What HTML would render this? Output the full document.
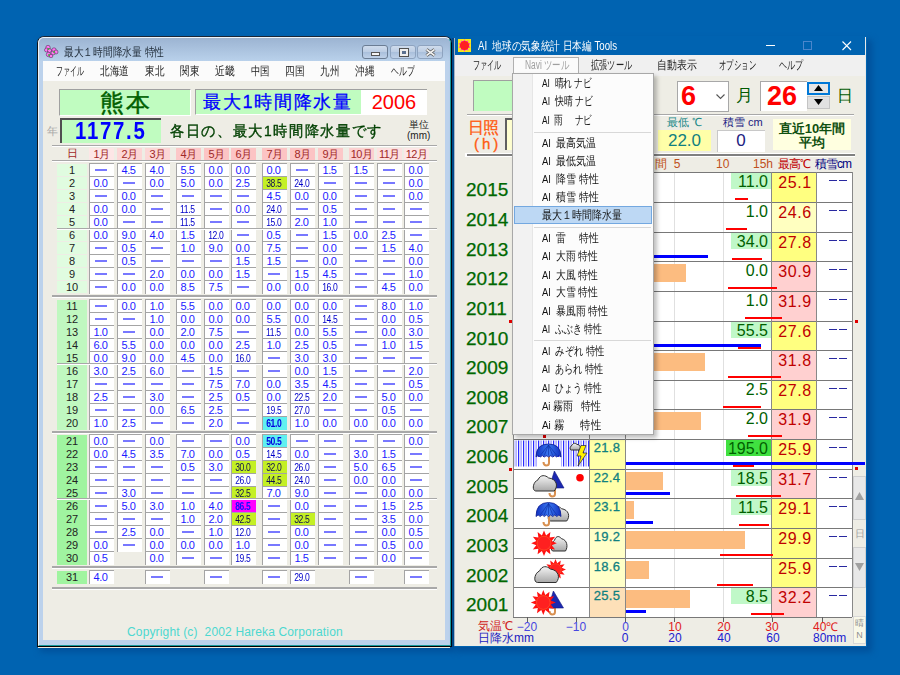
<!DOCTYPE html><html><head><meta charset="utf-8"><style>
*{box-sizing:border-box}
body{margin:0;width:900px;height:675px;overflow:hidden;background:#0063b1;font-family:"Liberation Sans",sans-serif;position:relative}
.a{position:absolute}
.t{position:absolute;white-space:nowrap}
.c{position:absolute;width:25px;height:14px;border-top:1px solid #a4a4a4;border-left:1px solid #a4a4a4;background:#fff;color:#1c1cff;font-size:11px;line-height:13.5px;text-align:center;letter-spacing:-.4px;padding-right:3px}
.c i{position:absolute;left:5px;top:5px;width:12px;height:2px;background:#7878ff}
.c b{font-weight:normal;display:inline-block;transform:scaleX(.78);font-size:11px;letter-spacing:-.5px;color:#0000c8}
.lbl{position:absolute;left:57px;width:30px;height:12px;font-size:11px;line-height:13px;text-align:center;color:#222}
.sep{position:absolute;left:52px;width:385px;height:1px;background:#a8a8a8;border-bottom:1px solid #fff;box-sizing:content-box}
.mi{position:absolute;font-size:12px;color:#222;top:63px;line-height:16px}
.dd{position:absolute;left:541px;font-size:11.5px;color:#111;line-height:14px}
</style></head><body>
<div class="a" style="left:40px;top:40px;width:416px;height:612px;background:#00509a;filter:blur(3px)"></div>
<div class="a" style="left:37px;top:36px;width:415px;height:611px;background:#bcd2ec;border:1px solid #000;border-top-color:#1a2636;border-left-color:#101418;border-radius:7px 7px 0 0"></div>
<div class="a" style="left:38px;top:37px;width:413px;height:609px;border-top:1px solid #eef4fa;border-left:1px solid #eef4fa;border-right:1px solid #1a9a9a;border-bottom:1px solid #1a9a9a;border-radius:6px 6px 0 0"></div>
<div class="a" style="left:38px;top:647px;width:412px;height:1px;background:#f0ece0"></div>
<div class="a" style="left:39px;top:38px;width:411px;height:23px;background:linear-gradient(#9cb4d2,#b9d1eb);border-radius:5px 5px 0 0"></div>
<div class="a" style="left:43px;top:61px;width:402px;height:20px;background:#fbfbfb"></div>
<div class="a" style="left:43px;top:81px;width:402px;height:559px;background:#eeede5"></div>
<svg class="a" style="left:44px;top:44px" width="15" height="14" viewBox="0 0 15 14"><g fill="#ff78f0" stroke="#3a2040" stroke-width=".5"><circle cx="4" cy="3.5" r="2.2"/><circle cx="2.5" cy="6" r="2"/><circle cx="5.5" cy="6.5" r="2"/><circle cx="10" cy="6" r="2.2"/><circle cx="12" cy="8" r="2"/><circle cx="9" cy="9" r="2"/><circle cx="4.5" cy="10.5" r="2.2"/><circle cx="7" cy="12" r="1.8"/></g><circle cx="4.5" cy="5" r="1" fill="#40b040"/><circle cx="10" cy="8" r="1" fill="#40b040"/><circle cx="5" cy="11" r="1" fill="#40b040"/></svg>
<div class="t" style="left:64px;top:45px;font-size:12px;line-height:14px;color:#1e2a36;"><span id="f1" style="display:inline-block;transform:scaleX(0.8107);transform-origin:0 0">最大１時間降水量 特性</span></div>
<div class="a" style="left:362px;top:45px;width:26px;height:14px;border:1px solid #6b7d94;border-radius:3px;background:linear-gradient(#cfdcec 0%,#bccde3 50%,#a9bfdb 51%,#bfd1e8 100%)"><div class="a" style="left:8px;top:6px;width:9px;height:4px;background:#f4f4f4;border:1px solid #555"></div></div>
<div class="a" style="left:390px;top:45px;width:26px;height:14px;border:1px solid #8ea3bf;border-radius:3px;background:linear-gradient(#cfdcec 0%,#bccde3 50%,#a9bfdb 51%,#bfd1e8 100%)"><div class="a" style="left:9px;top:3px;width:8px;height:7px;background:#5a7090;border:2px solid #eeeeee;outline:1px solid #505050"></div></div>
<div class="a" style="left:417px;top:45px;width:26px;height:14px;border:1px solid #8ea3bf;border-radius:3px;background:linear-gradient(#cfdcec 0%,#bccde3 50%,#a9bfdb 51%,#bfd1e8 100%)"><svg class="a" style="left:7px;top:2px" width="11" height="9"><path d="M1.5 1.5L9.5 7.5M9.5 1.5L1.5 7.5" stroke="#555" stroke-width="3.2"/><path d="M1.5 1.5L9.5 7.5M9.5 1.5L1.5 7.5" stroke="#f0f0f0" stroke-width="1.6"/></svg></div>
<div class="t" style="left:55.7px;top:63px;font-size:12px;line-height:16px;color:#222;"><span id="f2" style="display:inline-block;transform:scaleX(0.5833);transform-origin:0 0">ファイル</span></div>
<div class="t" style="left:100px;top:63px;font-size:12px;line-height:16px;color:#222;"><span id="f3" style="display:inline-block;transform:scaleX(0.8056);transform-origin:0 0">北海道</span></div>
<div class="t" style="left:144.8px;top:63px;font-size:12px;line-height:16px;color:#222;"><span id="f4" style="display:inline-block;transform:scaleX(0.8000);transform-origin:0 0">東北</span></div>
<div class="t" style="left:179.8px;top:63px;font-size:12px;line-height:16px;color:#222;"><span id="f5" style="display:inline-block;transform:scaleX(0.8000);transform-origin:0 0">関東</span></div>
<div class="t" style="left:214.8px;top:63px;font-size:12px;line-height:16px;color:#222;"><span id="f6" style="display:inline-block;transform:scaleX(0.8333);transform-origin:0 0">近畿</span></div>
<div class="t" style="left:250.6px;top:63px;font-size:12px;line-height:16px;color:#222;"><span id="f7" style="display:inline-block;transform:scaleX(0.7833);transform-origin:0 0">中国</span></div>
<div class="t" style="left:284.8px;top:63px;font-size:12px;line-height:16px;color:#222;"><span id="f8" style="display:inline-block;transform:scaleX(0.8000);transform-origin:0 0">四国</span></div>
<div class="t" style="left:320px;top:63px;font-size:12px;line-height:16px;color:#222;"><span id="f9" style="display:inline-block;transform:scaleX(0.7917);transform-origin:0 0">九州</span></div>
<div class="t" style="left:355.4px;top:63px;font-size:12px;line-height:16px;color:#222;"><span id="f10" style="display:inline-block;transform:scaleX(0.8042);transform-origin:0 0">沖縄</span></div>
<div class="t" style="left:390.8px;top:63px;font-size:12px;line-height:16px;color:#222;"><span id="f11" style="display:inline-block;transform:scaleX(0.6528);transform-origin:0 0">ヘルプ</span></div>
<div class="a" style="left:59px;top:89px;width:132px;height:27px;background:#c0fcc0;border-top:1px solid #a0a0a0;border-left:1px solid #a0a0a0;border-right:1px solid #fff;border-bottom:1px solid #fff"></div>
<div class="t" style="left:59px;top:89px;width:132px;text-align:center;font-size:24px;line-height:28px;letter-spacing:2px;text-indent:2px;color:#006000;-webkit-text-stroke:.5px #006000">熊本</div>
<div class="a" style="left:195px;top:89px;width:166px;height:26px;background:#c0fcc0;border-top:1px solid #a0a0a0;border-left:1px solid #a0a0a0;border-bottom:1px solid #fff"></div>
<div class="t" style="left:203px;top:89px;font-size:18px;line-height:27px;letter-spacing:1.7px;color:#0000ff;-webkit-text-stroke:.3px #0000ff">最大1時間降水量</div>
<div class="a" style="left:361px;top:89px;width:66px;height:26px;background:#fff;border-top:1px solid #a0a0a0"></div>
<div class="t" style="left:361px;top:89px;width:66px;text-align:center;font-size:20px;line-height:27px;color:#ff0000">2006</div>
<div class="t" style="left:47px;top:124px;font-size:11px;line-height:14px;color:#a8a8a8">年</div>
<div class="a" style="left:60px;top:118px;width:101px;height:25px;background:#c0fcc0;border-top:2px solid #505050;border-left:2px solid #505050"></div>
<div class="t" style="left:75px;top:118px;font-size:24px;font-weight:bold;line-height:26px;color:#0000ff;letter-spacing:2px;transform:scaleX(.85);transform-origin:0 0">1177.5</div>
<div class="t" style="left:170px;top:123px;font-size:14.5px;line-height:17px;color:#004000;-webkit-text-stroke:.35px #004000;letter-spacing:1.5px"><span id="f12" style="display:inline-block;transform:scaleX(0.9506);transform-origin:0 0">各日の、最大1時間降水量です</span></div>
<div class="t" style="left:407px;top:119px;font-size:10px;line-height:11px;color:#222;text-align:center;width:23px">単位<br>(mm)</div>
<div class="sep" style="top:145px"></div>
<div class="sep" style="top:160px"></div>
<div class="t" style="left:57px;top:147px;width:30px;text-align:center;font-size:11px;line-height:13px;color:#a02828">日</div>
<div class="t" style="left:89px;top:148px;width:25px;height:12px;background:#fde6e6;text-align:center;font-size:11px;line-height:13px;color:#a02828;letter-spacing:-.5px">1月</div>
<div class="t" style="left:117px;top:148px;width:25px;height:12px;background:#fcd6d6;text-align:center;font-size:11px;line-height:13px;color:#a02828;letter-spacing:-.5px">2月</div>
<div class="t" style="left:145px;top:148px;width:25px;height:12px;background:#fcd6d6;text-align:center;font-size:11px;line-height:13px;color:#a02828;letter-spacing:-.5px">3月</div>
<div class="t" style="left:176px;top:148px;width:25px;height:12px;background:#fcc8c8;text-align:center;font-size:11px;line-height:13px;color:#a02828;letter-spacing:-.5px">4月</div>
<div class="t" style="left:204px;top:148px;width:25px;height:12px;background:#fcc4c4;text-align:center;font-size:11px;line-height:13px;color:#a02828;letter-spacing:-.5px">5月</div>
<div class="t" style="left:231px;top:148px;width:25px;height:12px;background:#fcc4c4;text-align:center;font-size:11px;line-height:13px;color:#a02828;letter-spacing:-.5px">6月</div>
<div class="t" style="left:262px;top:148px;width:25px;height:12px;background:#fcc4c4;text-align:center;font-size:11px;line-height:13px;color:#a02828;letter-spacing:-.5px">7月</div>
<div class="t" style="left:290px;top:148px;width:25px;height:12px;background:#fcc4c4;text-align:center;font-size:11px;line-height:13px;color:#a02828;letter-spacing:-.5px">8月</div>
<div class="t" style="left:318px;top:148px;width:25px;height:12px;background:#fcc8c8;text-align:center;font-size:11px;line-height:13px;color:#a02828;letter-spacing:-.5px">9月</div>
<div class="t" style="left:349px;top:148px;width:25px;height:12px;background:#fcd0d0;text-align:center;font-size:11px;line-height:13px;color:#a02828;letter-spacing:-.5px">10月</div>
<div class="t" style="left:377px;top:148px;width:25px;height:12px;background:#fde0e0;text-align:center;font-size:11px;line-height:13px;color:#a02828;letter-spacing:-.5px">11月</div>
<div class="t" style="left:404px;top:148px;width:25px;height:12px;background:#fde6e6;text-align:center;font-size:11px;line-height:13px;color:#a02828;letter-spacing:-.5px">12月</div>
<div class="lbl" style="top:164px;height:12px;background:#e0fce0">1</div>
<div class="c" style="left:89px;top:163px"><i></i></div>
<div class="c" style="left:117px;top:163px">4.5</div>
<div class="c" style="left:145px;top:163px">4.0</div>
<div class="c" style="left:176px;top:163px">5.5</div>
<div class="c" style="left:204px;top:163px">0.0</div>
<div class="c" style="left:231px;top:163px">0.0</div>
<div class="c" style="left:262px;top:163px">0.0</div>
<div class="c" style="left:290px;top:163px"><i></i></div>
<div class="c" style="left:318px;top:163px">1.5</div>
<div class="c" style="left:349px;top:163px">1.5</div>
<div class="c" style="left:377px;top:163px"><i></i></div>
<div class="c" style="left:404px;top:163px">0.0</div>
<div class="lbl" style="top:177px;height:12px;background:#e0fce0">2</div>
<div class="c" style="left:89px;top:176px">0.0</div>
<div class="c" style="left:117px;top:176px"><i></i></div>
<div class="c" style="left:145px;top:176px">0.0</div>
<div class="c" style="left:176px;top:176px">5.0</div>
<div class="c" style="left:204px;top:176px">0.0</div>
<div class="c" style="left:231px;top:176px">2.5</div>
<div class="c" style="left:262px;top:176px;background:#c4f024"><b style="color:#101050">38.5</b></div>
<div class="c" style="left:290px;top:176px"><b style="">24.0</b></div>
<div class="c" style="left:318px;top:176px"><i></i></div>
<div class="c" style="left:349px;top:176px"><i></i></div>
<div class="c" style="left:377px;top:176px"><i></i></div>
<div class="c" style="left:404px;top:176px">0.0</div>
<div class="lbl" style="top:190px;height:12px;background:#e0fce0">3</div>
<div class="c" style="left:89px;top:189px"><i></i></div>
<div class="c" style="left:117px;top:189px">0.0</div>
<div class="c" style="left:145px;top:189px"><i></i></div>
<div class="c" style="left:176px;top:189px"><i></i></div>
<div class="c" style="left:204px;top:189px"><i></i></div>
<div class="c" style="left:231px;top:189px"><i></i></div>
<div class="c" style="left:262px;top:189px">4.5</div>
<div class="c" style="left:290px;top:189px">0.0</div>
<div class="c" style="left:318px;top:189px">0.0</div>
<div class="c" style="left:349px;top:189px"><i></i></div>
<div class="c" style="left:377px;top:189px"><i></i></div>
<div class="c" style="left:404px;top:189px">0.0</div>
<div class="lbl" style="top:203px;height:12px;background:#e0fce0">4</div>
<div class="c" style="left:89px;top:202px">0.0</div>
<div class="c" style="left:117px;top:202px">0.0</div>
<div class="c" style="left:145px;top:202px"><i></i></div>
<div class="c" style="left:176px;top:202px"><b style="">11.5</b></div>
<div class="c" style="left:204px;top:202px"><i></i></div>
<div class="c" style="left:231px;top:202px">0.0</div>
<div class="c" style="left:262px;top:202px"><b style="">24.0</b></div>
<div class="c" style="left:290px;top:202px"><i></i></div>
<div class="c" style="left:318px;top:202px">0.5</div>
<div class="c" style="left:349px;top:202px"><i></i></div>
<div class="c" style="left:377px;top:202px"><i></i></div>
<div class="c" style="left:404px;top:202px"><i></i></div>
<div class="lbl" style="top:216px;height:12px;background:#e0fce0">5</div>
<div class="c" style="left:89px;top:215px">0.0</div>
<div class="c" style="left:117px;top:215px"><i></i></div>
<div class="c" style="left:145px;top:215px"><i></i></div>
<div class="c" style="left:176px;top:215px"><b style="">11.5</b></div>
<div class="c" style="left:204px;top:215px"><i></i></div>
<div class="c" style="left:231px;top:215px"><i></i></div>
<div class="c" style="left:262px;top:215px"><b style="">15.0</b></div>
<div class="c" style="left:290px;top:215px">2.0</div>
<div class="c" style="left:318px;top:215px">1.0</div>
<div class="c" style="left:349px;top:215px"><i></i></div>
<div class="c" style="left:377px;top:215px"><i></i></div>
<div class="c" style="left:404px;top:215px"><i></i></div>
<div class="lbl" style="top:229px;height:12px;background:#e0fce0">6</div>
<div class="c" style="left:89px;top:228px">0.0</div>
<div class="c" style="left:117px;top:228px">9.0</div>
<div class="c" style="left:145px;top:228px">4.0</div>
<div class="c" style="left:176px;top:228px">1.5</div>
<div class="c" style="left:204px;top:228px"><b style="">12.0</b></div>
<div class="c" style="left:231px;top:228px"><i></i></div>
<div class="c" style="left:262px;top:228px">0.5</div>
<div class="c" style="left:290px;top:228px"><i></i></div>
<div class="c" style="left:318px;top:228px">1.5</div>
<div class="c" style="left:349px;top:228px">0.0</div>
<div class="c" style="left:377px;top:228px">2.5</div>
<div class="c" style="left:404px;top:228px"><i></i></div>
<div class="lbl" style="top:242px;height:12px;background:#e0fce0">7</div>
<div class="c" style="left:89px;top:241px"><i></i></div>
<div class="c" style="left:117px;top:241px">0.5</div>
<div class="c" style="left:145px;top:241px"><i></i></div>
<div class="c" style="left:176px;top:241px">1.0</div>
<div class="c" style="left:204px;top:241px">9.0</div>
<div class="c" style="left:231px;top:241px">0.0</div>
<div class="c" style="left:262px;top:241px">7.5</div>
<div class="c" style="left:290px;top:241px"><i></i></div>
<div class="c" style="left:318px;top:241px">0.0</div>
<div class="c" style="left:349px;top:241px"><i></i></div>
<div class="c" style="left:377px;top:241px">1.5</div>
<div class="c" style="left:404px;top:241px">4.0</div>
<div class="lbl" style="top:255px;height:12px;background:#e0fce0">8</div>
<div class="c" style="left:89px;top:254px"><i></i></div>
<div class="c" style="left:117px;top:254px">0.5</div>
<div class="c" style="left:145px;top:254px"><i></i></div>
<div class="c" style="left:176px;top:254px"><i></i></div>
<div class="c" style="left:204px;top:254px"><i></i></div>
<div class="c" style="left:231px;top:254px">1.5</div>
<div class="c" style="left:262px;top:254px">1.5</div>
<div class="c" style="left:290px;top:254px"><i></i></div>
<div class="c" style="left:318px;top:254px">0.0</div>
<div class="c" style="left:349px;top:254px"><i></i></div>
<div class="c" style="left:377px;top:254px"><i></i></div>
<div class="c" style="left:404px;top:254px">0.0</div>
<div class="lbl" style="top:268px;height:12px;background:#e0fce0">9</div>
<div class="c" style="left:89px;top:267px"><i></i></div>
<div class="c" style="left:117px;top:267px"><i></i></div>
<div class="c" style="left:145px;top:267px">2.0</div>
<div class="c" style="left:176px;top:267px">0.0</div>
<div class="c" style="left:204px;top:267px">0.0</div>
<div class="c" style="left:231px;top:267px">1.5</div>
<div class="c" style="left:262px;top:267px"><i></i></div>
<div class="c" style="left:290px;top:267px">1.5</div>
<div class="c" style="left:318px;top:267px">4.5</div>
<div class="c" style="left:349px;top:267px"><i></i></div>
<div class="c" style="left:377px;top:267px"><i></i></div>
<div class="c" style="left:404px;top:267px">1.0</div>
<div class="lbl" style="top:281px;height:12px;background:#e0fce0">10</div>
<div class="c" style="left:89px;top:280px"><i></i></div>
<div class="c" style="left:117px;top:280px">0.0</div>
<div class="c" style="left:145px;top:280px">0.0</div>
<div class="c" style="left:176px;top:280px">8.5</div>
<div class="c" style="left:204px;top:280px">7.5</div>
<div class="c" style="left:231px;top:280px"><i></i></div>
<div class="c" style="left:262px;top:280px">0.0</div>
<div class="c" style="left:290px;top:280px">0.0</div>
<div class="c" style="left:318px;top:280px"><b style="">16.0</b></div>
<div class="c" style="left:349px;top:280px"><i></i></div>
<div class="c" style="left:377px;top:280px">4.5</div>
<div class="c" style="left:404px;top:280px">0.0</div>
<div class="lbl" style="top:300px;height:13px;background:#c0f8c0">11</div>
<div class="c" style="left:89px;top:299px"><i></i></div>
<div class="c" style="left:117px;top:299px">0.0</div>
<div class="c" style="left:145px;top:299px">1.0</div>
<div class="c" style="left:176px;top:299px">5.5</div>
<div class="c" style="left:204px;top:299px">0.0</div>
<div class="c" style="left:231px;top:299px">0.0</div>
<div class="c" style="left:262px;top:299px">0.0</div>
<div class="c" style="left:290px;top:299px">0.0</div>
<div class="c" style="left:318px;top:299px">0.0</div>
<div class="c" style="left:349px;top:299px"><i></i></div>
<div class="c" style="left:377px;top:299px">8.0</div>
<div class="c" style="left:404px;top:299px">1.0</div>
<div class="lbl" style="top:313px;height:13px;background:#c0f8c0">12</div>
<div class="c" style="left:89px;top:312px"><i></i></div>
<div class="c" style="left:117px;top:312px"><i></i></div>
<div class="c" style="left:145px;top:312px">1.0</div>
<div class="c" style="left:176px;top:312px">0.0</div>
<div class="c" style="left:204px;top:312px">0.0</div>
<div class="c" style="left:231px;top:312px">0.0</div>
<div class="c" style="left:262px;top:312px">5.5</div>
<div class="c" style="left:290px;top:312px">0.0</div>
<div class="c" style="left:318px;top:312px"><b style="">14.5</b></div>
<div class="c" style="left:349px;top:312px"><i></i></div>
<div class="c" style="left:377px;top:312px">0.0</div>
<div class="c" style="left:404px;top:312px">0.5</div>
<div class="lbl" style="top:326px;height:13px;background:#c0f8c0">13</div>
<div class="c" style="left:89px;top:325px">1.0</div>
<div class="c" style="left:117px;top:325px"><i></i></div>
<div class="c" style="left:145px;top:325px">0.0</div>
<div class="c" style="left:176px;top:325px">2.0</div>
<div class="c" style="left:204px;top:325px">7.5</div>
<div class="c" style="left:231px;top:325px"><i></i></div>
<div class="c" style="left:262px;top:325px"><b style="">11.5</b></div>
<div class="c" style="left:290px;top:325px">0.0</div>
<div class="c" style="left:318px;top:325px">5.5</div>
<div class="c" style="left:349px;top:325px"><i></i></div>
<div class="c" style="left:377px;top:325px">0.0</div>
<div class="c" style="left:404px;top:325px">3.0</div>
<div class="lbl" style="top:339px;height:13px;background:#c0f8c0">14</div>
<div class="c" style="left:89px;top:338px">6.0</div>
<div class="c" style="left:117px;top:338px">5.5</div>
<div class="c" style="left:145px;top:338px">0.0</div>
<div class="c" style="left:176px;top:338px">0.0</div>
<div class="c" style="left:204px;top:338px">0.0</div>
<div class="c" style="left:231px;top:338px">2.5</div>
<div class="c" style="left:262px;top:338px">1.0</div>
<div class="c" style="left:290px;top:338px">2.5</div>
<div class="c" style="left:318px;top:338px">0.5</div>
<div class="c" style="left:349px;top:338px"><i></i></div>
<div class="c" style="left:377px;top:338px">1.0</div>
<div class="c" style="left:404px;top:338px">1.5</div>
<div class="lbl" style="top:352px;height:13px;background:#c0f8c0">15</div>
<div class="c" style="left:89px;top:351px">0.0</div>
<div class="c" style="left:117px;top:351px">9.0</div>
<div class="c" style="left:145px;top:351px">0.0</div>
<div class="c" style="left:176px;top:351px">4.5</div>
<div class="c" style="left:204px;top:351px">0.0</div>
<div class="c" style="left:231px;top:351px"><b style="">16.0</b></div>
<div class="c" style="left:262px;top:351px"><i></i></div>
<div class="c" style="left:290px;top:351px">3.0</div>
<div class="c" style="left:318px;top:351px">3.0</div>
<div class="c" style="left:349px;top:351px"><i></i></div>
<div class="c" style="left:377px;top:351px"><i></i></div>
<div class="c" style="left:404px;top:351px"><i></i></div>
<div class="lbl" style="top:365px;height:13px;background:#c0f8c0">16</div>
<div class="c" style="left:89px;top:364px">3.0</div>
<div class="c" style="left:117px;top:364px">2.5</div>
<div class="c" style="left:145px;top:364px">6.0</div>
<div class="c" style="left:176px;top:364px"><i></i></div>
<div class="c" style="left:204px;top:364px">1.5</div>
<div class="c" style="left:231px;top:364px"><i></i></div>
<div class="c" style="left:262px;top:364px"><i></i></div>
<div class="c" style="left:290px;top:364px">0.0</div>
<div class="c" style="left:318px;top:364px">1.5</div>
<div class="c" style="left:349px;top:364px"><i></i></div>
<div class="c" style="left:377px;top:364px"><i></i></div>
<div class="c" style="left:404px;top:364px">2.0</div>
<div class="lbl" style="top:378px;height:13px;background:#c0f8c0">17</div>
<div class="c" style="left:89px;top:377px"><i></i></div>
<div class="c" style="left:117px;top:377px"><i></i></div>
<div class="c" style="left:145px;top:377px"><i></i></div>
<div class="c" style="left:176px;top:377px"><i></i></div>
<div class="c" style="left:204px;top:377px">7.5</div>
<div class="c" style="left:231px;top:377px">7.0</div>
<div class="c" style="left:262px;top:377px">0.0</div>
<div class="c" style="left:290px;top:377px">3.5</div>
<div class="c" style="left:318px;top:377px">4.5</div>
<div class="c" style="left:349px;top:377px"><i></i></div>
<div class="c" style="left:377px;top:377px"><i></i></div>
<div class="c" style="left:404px;top:377px">0.5</div>
<div class="lbl" style="top:391px;height:13px;background:#c0f8c0">18</div>
<div class="c" style="left:89px;top:390px">2.5</div>
<div class="c" style="left:117px;top:390px"><i></i></div>
<div class="c" style="left:145px;top:390px">3.0</div>
<div class="c" style="left:176px;top:390px"><i></i></div>
<div class="c" style="left:204px;top:390px">2.5</div>
<div class="c" style="left:231px;top:390px">0.5</div>
<div class="c" style="left:262px;top:390px">0.0</div>
<div class="c" style="left:290px;top:390px"><b style="">22.5</b></div>
<div class="c" style="left:318px;top:390px">2.0</div>
<div class="c" style="left:349px;top:390px"><i></i></div>
<div class="c" style="left:377px;top:390px">5.0</div>
<div class="c" style="left:404px;top:390px">0.0</div>
<div class="lbl" style="top:404px;height:13px;background:#c0f8c0">19</div>
<div class="c" style="left:89px;top:403px"><i></i></div>
<div class="c" style="left:117px;top:403px"><i></i></div>
<div class="c" style="left:145px;top:403px">0.0</div>
<div class="c" style="left:176px;top:403px">6.5</div>
<div class="c" style="left:204px;top:403px">2.5</div>
<div class="c" style="left:231px;top:403px"><i></i></div>
<div class="c" style="left:262px;top:403px"><b style="">19.5</b></div>
<div class="c" style="left:290px;top:403px"><b style="">27.0</b></div>
<div class="c" style="left:318px;top:403px"><i></i></div>
<div class="c" style="left:349px;top:403px"><i></i></div>
<div class="c" style="left:377px;top:403px">0.5</div>
<div class="c" style="left:404px;top:403px"><i></i></div>
<div class="lbl" style="top:417px;height:13px;background:#c0f8c0">20</div>
<div class="c" style="left:89px;top:416px">1.0</div>
<div class="c" style="left:117px;top:416px">2.5</div>
<div class="c" style="left:145px;top:416px"><i></i></div>
<div class="c" style="left:176px;top:416px"><i></i></div>
<div class="c" style="left:204px;top:416px">2.0</div>
<div class="c" style="left:231px;top:416px"><i></i></div>
<div class="c" style="left:262px;top:416px;background:#60f0f0"><b style="font-weight:bold;color:#0000e0">61.0</b></div>
<div class="c" style="left:290px;top:416px">1.0</div>
<div class="c" style="left:318px;top:416px">0.0</div>
<div class="c" style="left:349px;top:416px">0.0</div>
<div class="c" style="left:377px;top:416px">0.0</div>
<div class="c" style="left:404px;top:416px">0.0</div>
<div class="lbl" style="top:435px;height:13px;background:#a0f4a0">21</div>
<div class="c" style="left:89px;top:434px">0.0</div>
<div class="c" style="left:117px;top:434px"><i></i></div>
<div class="c" style="left:145px;top:434px">0.0</div>
<div class="c" style="left:176px;top:434px"><i></i></div>
<div class="c" style="left:204px;top:434px"><i></i></div>
<div class="c" style="left:231px;top:434px">0.0</div>
<div class="c" style="left:262px;top:434px;background:#60f0f0"><b style="font-weight:bold;color:#0000e0">50.5</b></div>
<div class="c" style="left:290px;top:434px"><i></i></div>
<div class="c" style="left:318px;top:434px"><i></i></div>
<div class="c" style="left:349px;top:434px"><i></i></div>
<div class="c" style="left:377px;top:434px"><i></i></div>
<div class="c" style="left:404px;top:434px">0.0</div>
<div class="lbl" style="top:448px;height:13px;background:#a0f4a0">22</div>
<div class="c" style="left:89px;top:447px">0.0</div>
<div class="c" style="left:117px;top:447px">4.5</div>
<div class="c" style="left:145px;top:447px">3.5</div>
<div class="c" style="left:176px;top:447px">7.0</div>
<div class="c" style="left:204px;top:447px">0.0</div>
<div class="c" style="left:231px;top:447px">0.5</div>
<div class="c" style="left:262px;top:447px"><b style="">14.5</b></div>
<div class="c" style="left:290px;top:447px">0.0</div>
<div class="c" style="left:318px;top:447px"><i></i></div>
<div class="c" style="left:349px;top:447px">3.0</div>
<div class="c" style="left:377px;top:447px">1.5</div>
<div class="c" style="left:404px;top:447px"><i></i></div>
<div class="lbl" style="top:461px;height:13px;background:#a0f4a0">23</div>
<div class="c" style="left:89px;top:460px"><i></i></div>
<div class="c" style="left:117px;top:460px"><i></i></div>
<div class="c" style="left:145px;top:460px"><i></i></div>
<div class="c" style="left:176px;top:460px">0.5</div>
<div class="c" style="left:204px;top:460px">3.0</div>
<div class="c" style="left:231px;top:460px;background:#c4f024"><b style="color:#101050">30.0</b></div>
<div class="c" style="left:262px;top:460px;background:#c4f024"><b style="color:#101050">32.0</b></div>
<div class="c" style="left:290px;top:460px"><b style="">26.0</b></div>
<div class="c" style="left:318px;top:460px"><i></i></div>
<div class="c" style="left:349px;top:460px">5.0</div>
<div class="c" style="left:377px;top:460px">6.5</div>
<div class="c" style="left:404px;top:460px"><i></i></div>
<div class="lbl" style="top:474px;height:13px;background:#a0f4a0">24</div>
<div class="c" style="left:89px;top:473px"><i></i></div>
<div class="c" style="left:117px;top:473px"><i></i></div>
<div class="c" style="left:145px;top:473px"><i></i></div>
<div class="c" style="left:176px;top:473px"><i></i></div>
<div class="c" style="left:204px;top:473px"><i></i></div>
<div class="c" style="left:231px;top:473px"><b style="">26.0</b></div>
<div class="c" style="left:262px;top:473px;background:#c4f024"><b style="color:#101050">44.5</b></div>
<div class="c" style="left:290px;top:473px"><b style="">24.0</b></div>
<div class="c" style="left:318px;top:473px"><i></i></div>
<div class="c" style="left:349px;top:473px">0.0</div>
<div class="c" style="left:377px;top:473px">0.0</div>
<div class="c" style="left:404px;top:473px"><i></i></div>
<div class="lbl" style="top:487px;height:13px;background:#a0f4a0">25</div>
<div class="c" style="left:89px;top:486px"><i></i></div>
<div class="c" style="left:117px;top:486px">3.0</div>
<div class="c" style="left:145px;top:486px"><i></i></div>
<div class="c" style="left:176px;top:486px"><i></i></div>
<div class="c" style="left:204px;top:486px"><i></i></div>
<div class="c" style="left:231px;top:486px;background:#c4f024"><b style="color:#101050">32.5</b></div>
<div class="c" style="left:262px;top:486px">7.0</div>
<div class="c" style="left:290px;top:486px">9.0</div>
<div class="c" style="left:318px;top:486px"><i></i></div>
<div class="c" style="left:349px;top:486px"><i></i></div>
<div class="c" style="left:377px;top:486px">0.0</div>
<div class="c" style="left:404px;top:486px">0.0</div>
<div class="lbl" style="top:500px;height:13px;background:#a0f4a0">26</div>
<div class="c" style="left:89px;top:499px"><i></i></div>
<div class="c" style="left:117px;top:499px">5.0</div>
<div class="c" style="left:145px;top:499px">3.0</div>
<div class="c" style="left:176px;top:499px">1.0</div>
<div class="c" style="left:204px;top:499px">4.0</div>
<div class="c" style="left:231px;top:499px;background:#ff00ff"><b style="font-weight:bold;color:#1010ff">86.5</b></div>
<div class="c" style="left:262px;top:499px"><i></i></div>
<div class="c" style="left:290px;top:499px">0.0</div>
<div class="c" style="left:318px;top:499px"><i></i></div>
<div class="c" style="left:349px;top:499px"><i></i></div>
<div class="c" style="left:377px;top:499px">1.5</div>
<div class="c" style="left:404px;top:499px">2.5</div>
<div class="lbl" style="top:513px;height:13px;background:#a0f4a0">27</div>
<div class="c" style="left:89px;top:512px"><i></i></div>
<div class="c" style="left:117px;top:512px"><i></i></div>
<div class="c" style="left:145px;top:512px"><i></i></div>
<div class="c" style="left:176px;top:512px">1.0</div>
<div class="c" style="left:204px;top:512px">2.0</div>
<div class="c" style="left:231px;top:512px;background:#c4f024"><b style="color:#101050">42.5</b></div>
<div class="c" style="left:262px;top:512px"><i></i></div>
<div class="c" style="left:290px;top:512px;background:#c4f024"><b style="color:#101050">32.5</b></div>
<div class="c" style="left:318px;top:512px"><i></i></div>
<div class="c" style="left:349px;top:512px"><i></i></div>
<div class="c" style="left:377px;top:512px">3.5</div>
<div class="c" style="left:404px;top:512px">0.0</div>
<div class="lbl" style="top:526px;height:13px;background:#a0f4a0">28</div>
<div class="c" style="left:89px;top:525px"><i></i></div>
<div class="c" style="left:117px;top:525px">2.5</div>
<div class="c" style="left:145px;top:525px">0.0</div>
<div class="c" style="left:176px;top:525px"><i></i></div>
<div class="c" style="left:204px;top:525px">1.0</div>
<div class="c" style="left:231px;top:525px"><b style="">12.0</b></div>
<div class="c" style="left:262px;top:525px"><i></i></div>
<div class="c" style="left:290px;top:525px">0.0</div>
<div class="c" style="left:318px;top:525px"><i></i></div>
<div class="c" style="left:349px;top:525px"><i></i></div>
<div class="c" style="left:377px;top:525px">0.0</div>
<div class="c" style="left:404px;top:525px">0.5</div>
<div class="lbl" style="top:539px;height:13px;background:#a0f4a0">29</div>
<div class="c" style="left:89px;top:538px">0.0</div>
<div class="c" style="left:117px;top:538px"><i></i></div>
<div class="c" style="left:145px;top:538px">0.0</div>
<div class="c" style="left:176px;top:538px">0.0</div>
<div class="c" style="left:204px;top:538px">0.0</div>
<div class="c" style="left:231px;top:538px">1.0</div>
<div class="c" style="left:262px;top:538px"><i></i></div>
<div class="c" style="left:290px;top:538px">0.0</div>
<div class="c" style="left:318px;top:538px"><i></i></div>
<div class="c" style="left:349px;top:538px"><i></i></div>
<div class="c" style="left:377px;top:538px">0.5</div>
<div class="c" style="left:404px;top:538px">0.0</div>
<div class="lbl" style="top:552px;height:13px;background:#a0f4a0">30</div>
<div class="c" style="left:89px;top:551px">0.5</div>
<div class="c" style="left:145px;top:551px">0.0</div>
<div class="c" style="left:176px;top:551px"><i></i></div>
<div class="c" style="left:204px;top:551px"><i></i></div>
<div class="c" style="left:231px;top:551px"><b style="">19.5</b></div>
<div class="c" style="left:262px;top:551px"><i></i></div>
<div class="c" style="left:290px;top:551px">1.5</div>
<div class="c" style="left:318px;top:551px"><i></i></div>
<div class="c" style="left:349px;top:551px"><i></i></div>
<div class="c" style="left:377px;top:551px">0.0</div>
<div class="c" style="left:404px;top:551px"><i></i></div>
<div class="lbl" style="top:571px;height:13px;background:#a0f4a0">31</div>
<div class="c" style="left:89px;top:570px">4.0</div>
<div class="c" style="left:145px;top:570px"><i></i></div>
<div class="c" style="left:204px;top:570px"><i></i></div>
<div class="c" style="left:262px;top:570px"><i></i></div>
<div class="c" style="left:290px;top:570px"><b style="">29.0</b></div>
<div class="c" style="left:349px;top:570px"><i></i></div>
<div class="c" style="left:404px;top:570px"><i></i></div>
<div class="sep" style="top:228px;left:57px;width:380px"></div>
<div class="sep" style="top:295px;height:2px"></div>
<div class="sep" style="top:363px;left:57px;width:380px"></div>
<div class="sep" style="top:431px;height:2px"></div>
<div class="sep" style="top:498px;left:57px;width:380px"></div>
<div class="sep" style="top:566px;height:2px"></div>
<div class="sep" style="top:587px;height:2px"></div>
<div class="t" style="left:127px;top:625px;font-size:12px;line-height:14px;color:#4cd8d0;letter-spacing:.15px">Copyright (c)&nbsp; 2002 Hareka Corporation</div>
<div class="a" style="left:456px;top:40px;width:416px;height:612px;background:#00509a;filter:blur(3px)"></div>
<div class="a" style="left:452px;top:36px;width:415px;height:611px;background:#0063b1"></div>
<div class="a" style="left:452px;top:38px;width:2px;height:609px;background:#00488a"></div>
<div class="a" style="left:454px;top:38px;width:1px;height:608px;background:#a8b4c4"></div>
<div class="a" style="left:455px;top:55px;width:411px;height:591px;background:#eeede5"></div>
<div class="a" style="left:455px;top:55px;width:411px;height:21px;background:#f0f0f0"></div>
<div class="a" style="left:865px;top:37px;width:1px;height:609px;background:#e8e8e8"></div>
<svg class="a" style="left:458px;top:38.5px" width="13" height="13" viewBox="0 0 13 13"><rect width="13" height="13" fill="#f8e818"/><polygon points="6.5,0.2 7.8,2.5 10.2,1.4 9.9,4.0 12.5,4.6 10.7,6.5 12.5,8.4 9.9,9.0 10.2,11.6 7.8,10.5 6.5,12.8 5.2,10.5 2.8,11.6 3.1,9.0 0.5,8.4 2.3,6.5 0.5,4.6 3.1,4.0 2.8,1.4 5.2,2.5" fill="#ff30d0"/><circle cx="6.5" cy="6.5" r="4.6" fill="#ff2020"/></svg>
<div class="t" style="left:478px;top:39px;font-size:12px;line-height:14px;color:#fff;"><span id="f13" style="display:inline-block;transform:scaleX(0.8049);transform-origin:0 0">AI&nbsp; 地球の気象統計 日本編 Tools</span></div>
<div class="a" style="left:766px;top:45px;width:9px;height:1px;background:#fff"></div>
<div class="a" style="left:803px;top:41px;width:9px;height:9px;border:1px solid #4a86cc"></div>
<svg class="a" style="left:841.5px;top:40.5px" width="10" height="10"><path d="M0.5 0.5L9 9M9 0.5L0.5 9" stroke="#fff" stroke-width="1.1"/></svg>
<div class="t" style="left:472.5px;top:57px;font-size:12px;line-height:16px;color:#222;"><span id="f14" style="display:inline-block;transform:scaleX(0.5938);transform-origin:0 0">ファイル</span></div>
<div class="t" style="left:591px;top:57px;font-size:12px;line-height:16px;color:#222;"><span id="f15" style="display:inline-block;transform:scaleX(0.6833);transform-origin:0 0">拡張ツール</span></div>
<div class="t" style="left:656.6px;top:57px;font-size:12px;line-height:16px;color:#222;"><span id="f16" style="display:inline-block;transform:scaleX(0.8250);transform-origin:0 0">自動表示</span></div>
<div class="t" style="left:719.2px;top:57px;font-size:12px;line-height:16px;color:#222;"><span id="f17" style="display:inline-block;transform:scaleX(0.6183);transform-origin:0 0">オプション</span></div>
<div class="t" style="left:779.3px;top:57px;font-size:12px;line-height:16px;color:#222;"><span id="f18" style="display:inline-block;transform:scaleX(0.6750);transform-origin:0 0">ヘルプ</span></div>
<div class="a" style="left:473px;top:80px;width:180px;height:31px;background:#c0fcc0;border-top:1px solid #a0a0a0;border-left:1px solid #a0a0a0"></div>
<div class="a" style="left:467px;top:114px;width:387px;height:1px;background:#a8a8a8;border-bottom:1px solid #fff;box-sizing:content-box"></div>
<div class="t" style="left:468px;top:120px;font-size:16px;line-height:16px;color:#ff5a10;letter-spacing:-1px;-webkit-text-stroke:.3px #ff5a10">日照</div>
<div class="t" style="left:474px;top:136px;font-size:15px;line-height:15px;color:#ff5a10;letter-spacing:3px;-webkit-text-stroke:.3px #ff5a10">(h)</div>
<div class="a" style="left:505px;top:118px;width:145px;height:32px;background:#ffffd0;border-top:2px solid #606060;border-left:2px solid #606060"></div>
<div class="a" style="left:465px;top:153px;width:390px;height:4px;background:#fff"></div>
<div class="a" style="left:467px;top:154px;width:388px;height:2px;background:#808080"></div>
<div class="a" style="left:677px;top:81px;width:52px;height:31px;background:#fff;border:1px solid #a8a8a8"></div>
<div class="t" style="left:681px;top:83px;font-size:27px;font-weight:bold;line-height:27px;color:#ff0000">6</div>
<svg class="a" style="left:716px;top:94px" width="9" height="6"><path d="M0.5 0.5L4.5 4.5L8.5 0.5" fill="none" stroke="#555" stroke-width="1.1"/></svg>
<div class="t" style="left:736px;top:87px;font-size:17px;line-height:18px;color:#005a00">月</div>
<div class="a" style="left:760px;top:81px;width:47px;height:30px;background:#fff;border-top:1px solid #a8a8a8;border-left:1px solid #a8a8a8"></div>
<div class="t" style="left:767px;top:83px;font-size:27px;font-weight:bold;line-height:27px;color:#ff0000">26</div>
<div class="a" style="left:807px;top:82px;width:23px;height:13px;background:#e6e6e6;border:2px solid #0078d7"></div>
<svg class="a" style="left:814px;top:85px" width="9" height="6"><path d="M4.5 0L9 6H0Z" fill="#000"/></svg>
<div class="a" style="left:807px;top:96px;width:23px;height:13px;background:#e1e1e1;border:1px solid #c4c4c4"></div>
<svg class="a" style="left:814px;top:99px" width="9" height="6"><path d="M0 0H9L4.5 6Z" fill="#000"/></svg>
<div class="t" style="left:837px;top:87px;font-size:16px;line-height:18px;color:#005a00">日</div>
<div class="t" style="left:667px;top:116px;font-size:11px;line-height:13px;color:#208888">最低 ℃</div>
<div class="a" style="left:658px;top:130px;width:53px;height:21px;background:#ffffa8"></div>
<div class="t" style="left:658px;top:131px;width:53px;text-align:center;font-size:17px;line-height:20px;color:#108080">22.0</div>
<div class="t" style="left:723px;top:116px;font-size:11px;line-height:13px;color:#202080">積雪 cm</div>
<div class="a" style="left:717px;top:130px;width:48px;height:22px;background:#fff;border-left:1px solid #c8c8c8;border-top:1px solid #c8c8c8"></div>
<div class="t" style="left:717px;top:131px;width:48px;text-align:center;font-size:17px;line-height:20px;color:#202080">0</div>
<div class="a" style="left:773px;top:119px;width:78px;height:31px;background:#ffffe0"></div>
<div class="t" style="left:773px;top:122px;width:78px;text-align:center;font-size:13px;font-weight:bold;line-height:14px;color:#105010">直近10年間<br>平均</div>
<div class="t" style="left:655px;top:157px;font-size:12px;line-height:14px;color:#c05020">間&nbsp; 5</div>
<div class="t" style="left:716px;top:157px;font-size:12px;line-height:14px;color:#c05020">10</div>
<div class="t" style="left:753px;top:157px;font-size:12px;line-height:14px;color:#c05020">15h</div>
<div class="t" style="left:778px;top:157px;font-size:12px;line-height:14px;color:#c00000;letter-spacing:-1px">最高℃</div>
<div class="t" style="left:815px;top:157px;font-size:12px;line-height:14px;color:#000080;letter-spacing:-1px">積雪cm</div>
<div class="a" style="left:513px;top:172px;width:339px;height:445px;background:#fff"></div>
<div class="a" style="left:772px;top:172px;width:44px;height:30px;background:#ffff80"></div>
<div class="a" style="left:772px;top:202px;width:44px;height:30px;background:#ffffc0"></div>
<div class="a" style="left:772px;top:232px;width:44px;height:29px;background:#ffff80"></div>
<div class="a" style="left:772px;top:261px;width:44px;height:30px;background:#ffd0d0"></div>
<div class="a" style="left:772px;top:291px;width:44px;height:30px;background:#ffd0d0"></div>
<div class="a" style="left:772px;top:321px;width:44px;height:29px;background:#ffff80"></div>
<div class="a" style="left:772px;top:350px;width:44px;height:30px;background:#ffd0d0"></div>
<div class="a" style="left:772px;top:380px;width:44px;height:29px;background:#ffff80"></div>
<div class="a" style="left:772px;top:409px;width:44px;height:30px;background:#ffd0d0"></div>
<div class="a" style="left:589px;top:439px;width:36px;height:30px;background:#ffffa8"></div>
<div class="a" style="left:772px;top:439px;width:44px;height:30px;background:#ffff80"></div>
<div class="a" style="left:589px;top:469px;width:36px;height:29px;background:#ffffa8"></div>
<div class="a" style="left:772px;top:469px;width:44px;height:29px;background:#ffd0d0"></div>
<div class="a" style="left:589px;top:498px;width:36px;height:30px;background:#ffffa8"></div>
<div class="a" style="left:772px;top:498px;width:44px;height:30px;background:#ffff80"></div>
<div class="a" style="left:589px;top:528px;width:36px;height:30px;background:#ffffc8"></div>
<div class="a" style="left:772px;top:528px;width:44px;height:30px;background:#ffff80"></div>
<div class="a" style="left:589px;top:558px;width:36px;height:29px;background:#ffffc8"></div>
<div class="a" style="left:772px;top:558px;width:44px;height:29px;background:#ffff80"></div>
<div class="a" style="left:589px;top:587px;width:36px;height:30px;background:#fde0b8"></div>
<div class="a" style="left:772px;top:587px;width:44px;height:30px;background:#ffd0d0"></div>
<div class="a" style="left:674px;top:172px;width:1px;height:445px;background:#e0e0e0"></div>
<div class="a" style="left:723px;top:172px;width:1px;height:445px;background:#e0e0e0"></div>
<div class="a" style="left:513px;top:172px;width:339px;height:1px;background:#787878"></div>
<div class="a" style="left:513px;top:202px;width:339px;height:1px;background:#787878"></div>
<div class="a" style="left:513px;top:232px;width:339px;height:1px;background:#787878"></div>
<div class="a" style="left:513px;top:261px;width:339px;height:1px;background:#787878"></div>
<div class="a" style="left:513px;top:291px;width:339px;height:1px;background:#787878"></div>
<div class="a" style="left:513px;top:321px;width:339px;height:1px;background:#787878"></div>
<div class="a" style="left:513px;top:350px;width:339px;height:1px;background:#787878"></div>
<div class="a" style="left:513px;top:380px;width:339px;height:1px;background:#787878"></div>
<div class="a" style="left:513px;top:409px;width:339px;height:1px;background:#787878"></div>
<div class="a" style="left:513px;top:439px;width:339px;height:1px;background:#787878"></div>
<div class="a" style="left:513px;top:469px;width:339px;height:1px;background:#787878"></div>
<div class="a" style="left:513px;top:498px;width:339px;height:1px;background:#787878"></div>
<div class="a" style="left:513px;top:528px;width:339px;height:1px;background:#787878"></div>
<div class="a" style="left:513px;top:558px;width:339px;height:1px;background:#787878"></div>
<div class="a" style="left:513px;top:587px;width:339px;height:1px;background:#787878"></div>
<div class="a" style="left:513px;top:617px;width:339px;height:1px;background:#787878"></div>
<div class="a" style="left:513px;top:172px;width:1px;height:445px;background:#888"></div>
<div class="a" style="left:589px;top:172px;width:1px;height:445px;background:#888"></div>
<div class="a" style="left:625px;top:172px;width:1px;height:445px;background:#888"></div>
<div class="a" style="left:771px;top:172px;width:1px;height:445px;background:#888"></div>
<div class="a" style="left:816px;top:172px;width:1px;height:445px;background:#888"></div>
<div class="a" style="left:852px;top:172px;width:1px;height:445px;background:#888"></div>
<div class="a" style="left:731px;top:173px;width:40px;height:16px;background:#c0f8c8"></div>
<div class="t" style="left:700px;top:173px;width:68px;text-align:right;font-size:16px;line-height:18px;color:#006000">11.0</div>
<div class="a" style="left:734.7px;top:198px;width:13.5px;height:2px;background:#ff0000"></div>
<div class="t" style="left:773px;top:174px;width:44px;text-align:center;font-size:16px;line-height:18px;color:#c00000;letter-spacing:.6px">25.1</div>
<div class="a" style="left:829px;top:180px;width:8px;height:1px;background:#2828a0"></div><div class="a" style="left:838.5px;top:180px;width:8px;height:1px;background:#2828a0"></div>
<div class="t" style="left:700px;top:203px;width:68px;text-align:right;font-size:16px;line-height:18px;color:#006000">1.0</div>
<div class="a" style="left:726.0px;top:228px;width:21.0px;height:2px;background:#ff0000"></div>
<div class="t" style="left:773px;top:204px;width:44px;text-align:center;font-size:16px;line-height:18px;color:#c00000;letter-spacing:.6px">24.6</div>
<div class="a" style="left:829px;top:210px;width:8px;height:1px;background:#2828a0"></div><div class="a" style="left:838.5px;top:210px;width:8px;height:1px;background:#2828a0"></div>
<div class="a" style="left:731px;top:233px;width:40px;height:16px;background:#c0f8c8"></div>
<div class="t" style="left:700px;top:233px;width:68px;text-align:right;font-size:16px;line-height:18px;color:#006000">34.0</div>
<div class="a" style="left:626px;top:255px;width:82.3px;height:3px;background:#0000ff"></div>
<div class="a" style="left:731.5px;top:258px;width:30.5px;height:2px;background:#ff0000"></div>
<div class="t" style="left:773px;top:234px;width:44px;text-align:center;font-size:16px;line-height:18px;color:#c00000;letter-spacing:.6px">27.8</div>
<div class="a" style="left:829px;top:240px;width:8px;height:1px;background:#2828a0"></div><div class="a" style="left:838.5px;top:240px;width:8px;height:1px;background:#2828a0"></div>
<div class="a" style="left:626px;top:264px;width:59.7px;height:18px;background:#fcbc80"></div>
<div class="t" style="left:700px;top:262px;width:68px;text-align:right;font-size:16px;line-height:18px;color:#006000">0.0</div>
<div class="a" style="left:728.0px;top:287px;width:48.6px;height:2px;background:#ff0000"></div>
<div class="t" style="left:773px;top:263px;width:44px;text-align:center;font-size:16px;line-height:18px;color:#c00000;letter-spacing:.6px">30.9</div>
<div class="a" style="left:829px;top:269px;width:8px;height:1px;background:#2828a0"></div><div class="a" style="left:838.5px;top:269px;width:8px;height:1px;background:#2828a0"></div>
<div class="t" style="left:700px;top:292px;width:68px;text-align:right;font-size:16px;line-height:18px;color:#006000">1.0</div>
<div class="a" style="left:745.0px;top:317px;width:37.4px;height:2px;background:#ff0000"></div>
<div class="t" style="left:773px;top:293px;width:44px;text-align:center;font-size:16px;line-height:18px;color:#c00000;letter-spacing:.6px">31.9</div>
<div class="a" style="left:829px;top:299px;width:8px;height:1px;background:#2828a0"></div><div class="a" style="left:838.5px;top:299px;width:8px;height:1px;background:#2828a0"></div>
<div class="a" style="left:731px;top:322px;width:40px;height:16px;background:#c0f8c8"></div>
<div class="t" style="left:700px;top:322px;width:68px;text-align:right;font-size:16px;line-height:18px;color:#006000">55.5</div>
<div class="a" style="left:626px;top:344px;width:135.0px;height:3px;background:#0000ff"></div>
<div class="a" style="left:738.0px;top:347px;width:22.5px;height:2px;background:#ff0000"></div>
<div class="t" style="left:773px;top:323px;width:44px;text-align:center;font-size:16px;line-height:18px;color:#c00000;letter-spacing:.6px">27.6</div>
<div class="a" style="left:829px;top:329px;width:8px;height:1px;background:#2828a0"></div><div class="a" style="left:838.5px;top:329px;width:8px;height:1px;background:#2828a0"></div>
<div class="a" style="left:626px;top:353px;width:79.0px;height:18px;background:#fcbc80"></div>
<div class="a" style="left:728.0px;top:376px;width:52.5px;height:2px;background:#ff0000"></div>
<div class="t" style="left:773px;top:352px;width:44px;text-align:center;font-size:16px;line-height:18px;color:#c00000;letter-spacing:.6px">31.8</div>
<div class="a" style="left:829px;top:358px;width:8px;height:1px;background:#2828a0"></div><div class="a" style="left:838.5px;top:358px;width:8px;height:1px;background:#2828a0"></div>
<div class="t" style="left:700px;top:381px;width:68px;text-align:right;font-size:16px;line-height:18px;color:#006000">2.5</div>
<div class="a" style="left:723.4px;top:406px;width:38.0px;height:2px;background:#ff0000"></div>
<div class="t" style="left:773px;top:382px;width:44px;text-align:center;font-size:16px;line-height:18px;color:#c00000;letter-spacing:.6px">27.8</div>
<div class="a" style="left:829px;top:388px;width:8px;height:1px;background:#2828a0"></div><div class="a" style="left:838.5px;top:388px;width:8px;height:1px;background:#2828a0"></div>
<div class="a" style="left:626px;top:412px;width:74.8px;height:18px;background:#fcbc80"></div>
<div class="t" style="left:700px;top:410px;width:68px;text-align:right;font-size:16px;line-height:18px;color:#006000">2.0</div>
<div class="a" style="left:747.6px;top:435px;width:34.4px;height:2px;background:#ff0000"></div>
<div class="t" style="left:773px;top:411px;width:44px;text-align:center;font-size:16px;line-height:18px;color:#c00000;letter-spacing:.6px">31.9</div>
<div class="a" style="left:829px;top:417px;width:8px;height:1px;background:#2828a0"></div><div class="a" style="left:838.5px;top:417px;width:8px;height:1px;background:#2828a0"></div>
<div class="t" style="left:590px;top:441px;width:34px;text-align:center;font-size:13px;line-height:14px;color:#108080;-webkit-text-stroke:.3px #108080;letter-spacing:.3px">21.8</div>
<div class="a" style="left:726px;top:440px;width:45px;height:16px;background:#40e040"></div>
<div class="t" style="left:700px;top:440px;width:68px;text-align:right;font-size:16px;line-height:18px;color:#006000">195.0</div>
<div class="a" style="left:626px;top:462px;width:239.0px;height:3px;background:#0000ff"></div>
<div class="a" style="left:733.0px;top:465px;width:21.0px;height:2px;background:#ff0000"></div>
<div class="t" style="left:773px;top:441px;width:44px;text-align:center;font-size:16px;line-height:18px;color:#c00000;letter-spacing:.6px">25.9</div>
<div class="a" style="left:829px;top:447px;width:8px;height:1px;background:#2828a0"></div><div class="a" style="left:838.5px;top:447px;width:8px;height:1px;background:#2828a0"></div>
<div class="a" style="left:626px;top:472px;width:37.0px;height:18px;background:#fcbc80"></div>
<div class="t" style="left:590px;top:471px;width:34px;text-align:center;font-size:13px;line-height:14px;color:#108080;-webkit-text-stroke:.3px #108080;letter-spacing:.3px">22.4</div>
<div class="a" style="left:731px;top:470px;width:40px;height:16px;background:#c0f8c8"></div>
<div class="t" style="left:700px;top:470px;width:68px;text-align:right;font-size:16px;line-height:18px;color:#006000">18.5</div>
<div class="a" style="left:626px;top:492px;width:44.2px;height:3px;background:#0000ff"></div>
<div class="a" style="left:735.7px;top:495px;width:45.7px;height:2px;background:#ff0000"></div>
<div class="t" style="left:773px;top:471px;width:44px;text-align:center;font-size:16px;line-height:18px;color:#c00000;letter-spacing:.6px">31.7</div>
<div class="a" style="left:829px;top:477px;width:8px;height:1px;background:#2828a0"></div><div class="a" style="left:838.5px;top:477px;width:8px;height:1px;background:#2828a0"></div>
<div class="a" style="left:626px;top:501px;width:7.6px;height:18px;background:#fcbc80"></div>
<div class="t" style="left:590px;top:500px;width:34px;text-align:center;font-size:13px;line-height:14px;color:#108080;-webkit-text-stroke:.3px #108080;letter-spacing:.3px">23.1</div>
<div class="a" style="left:731px;top:499px;width:40px;height:16px;background:#c0f8c8"></div>
<div class="t" style="left:700px;top:499px;width:68px;text-align:right;font-size:16px;line-height:18px;color:#006000">11.5</div>
<div class="a" style="left:626px;top:521px;width:27.3px;height:3px;background:#0000ff"></div>
<div class="a" style="left:739.0px;top:524px;width:29.5px;height:2px;background:#ff0000"></div>
<div class="t" style="left:773px;top:500px;width:44px;text-align:center;font-size:16px;line-height:18px;color:#c00000;letter-spacing:.6px">29.1</div>
<div class="a" style="left:829px;top:506px;width:8px;height:1px;background:#2828a0"></div><div class="a" style="left:838.5px;top:506px;width:8px;height:1px;background:#2828a0"></div>
<div class="a" style="left:626px;top:531px;width:119.0px;height:18px;background:#fcbc80"></div>
<div class="t" style="left:590px;top:530px;width:34px;text-align:center;font-size:13px;line-height:14px;color:#108080;-webkit-text-stroke:.3px #108080;letter-spacing:.3px">19.2</div>
<div class="a" style="left:720.0px;top:554px;width:52.7px;height:2px;background:#ff0000"></div>
<div class="t" style="left:773px;top:530px;width:44px;text-align:center;font-size:16px;line-height:18px;color:#c00000;letter-spacing:.6px">29.9</div>
<div class="a" style="left:829px;top:536px;width:8px;height:1px;background:#2828a0"></div><div class="a" style="left:838.5px;top:536px;width:8px;height:1px;background:#2828a0"></div>
<div class="a" style="left:626px;top:561px;width:22.6px;height:18px;background:#fcbc80"></div>
<div class="t" style="left:590px;top:560px;width:34px;text-align:center;font-size:13px;line-height:14px;color:#108080;-webkit-text-stroke:.3px #108080;letter-spacing:.3px">18.6</div>
<div class="a" style="left:717.0px;top:584px;width:36.0px;height:2px;background:#ff0000"></div>
<div class="t" style="left:773px;top:560px;width:44px;text-align:center;font-size:16px;line-height:18px;color:#c00000;letter-spacing:.6px">25.9</div>
<div class="a" style="left:829px;top:566px;width:8px;height:1px;background:#2828a0"></div><div class="a" style="left:838.5px;top:566px;width:8px;height:1px;background:#2828a0"></div>
<div class="a" style="left:626px;top:590px;width:64.2px;height:18px;background:#fcbc80"></div>
<div class="t" style="left:590px;top:589px;width:34px;text-align:center;font-size:13px;line-height:14px;color:#108080;-webkit-text-stroke:.3px #108080;letter-spacing:.3px">25.5</div>
<div class="a" style="left:731px;top:588px;width:40px;height:16px;background:#c0f8c8"></div>
<div class="t" style="left:700px;top:588px;width:68px;text-align:right;font-size:16px;line-height:18px;color:#006000">8.5</div>
<div class="a" style="left:626px;top:610px;width:20.0px;height:3px;background:#0000ff"></div>
<div class="a" style="left:750.8px;top:613px;width:32.9px;height:2px;background:#ff0000"></div>
<div class="t" style="left:773px;top:589px;width:44px;text-align:center;font-size:16px;line-height:18px;color:#c00000;letter-spacing:.6px">32.2</div>
<div class="a" style="left:829px;top:595px;width:8px;height:1px;background:#2828a0"></div><div class="a" style="left:838.5px;top:595px;width:8px;height:1px;background:#2828a0"></div>
<div class="t" style="left:466px;top:180px;font-size:19px;line-height:20px;color:#006800;-webkit-text-stroke:.25px #006800">2015</div>
<div class="t" style="left:466px;top:210px;font-size:19px;line-height:20px;color:#006800;-webkit-text-stroke:.25px #006800">2014</div>
<div class="t" style="left:466px;top:240px;font-size:19px;line-height:20px;color:#006800;-webkit-text-stroke:.25px #006800">2013</div>
<div class="t" style="left:466px;top:269px;font-size:19px;line-height:20px;color:#006800;-webkit-text-stroke:.25px #006800">2012</div>
<div class="t" style="left:466px;top:299px;font-size:19px;line-height:20px;color:#006800;-webkit-text-stroke:.25px #006800">2011</div>
<div class="t" style="left:466px;top:329px;font-size:19px;line-height:20px;color:#006800;-webkit-text-stroke:.25px #006800">2010</div>
<div class="t" style="left:466px;top:358px;font-size:19px;line-height:20px;color:#006800;-webkit-text-stroke:.25px #006800">2009</div>
<div class="t" style="left:466px;top:388px;font-size:19px;line-height:20px;color:#006800;-webkit-text-stroke:.25px #006800">2008</div>
<div class="t" style="left:466px;top:417px;font-size:19px;line-height:20px;color:#006800;-webkit-text-stroke:.25px #006800">2007</div>
<div class="t" style="left:466px;top:447px;font-size:19px;line-height:20px;color:#006800;-webkit-text-stroke:.25px #006800">2006</div>
<div class="t" style="left:466px;top:477px;font-size:19px;line-height:20px;color:#006800;-webkit-text-stroke:.25px #006800">2005</div>
<div class="t" style="left:466px;top:506px;font-size:19px;line-height:20px;color:#006800;-webkit-text-stroke:.25px #006800">2004</div>
<div class="t" style="left:466px;top:536px;font-size:19px;line-height:20px;color:#006800;-webkit-text-stroke:.25px #006800">2003</div>
<div class="t" style="left:466px;top:566px;font-size:19px;line-height:20px;color:#006800;-webkit-text-stroke:.25px #006800">2002</div>
<div class="t" style="left:466px;top:595px;font-size:19px;line-height:20px;color:#006800;-webkit-text-stroke:.25px #006800">2001</div>
<div class="a" style="left:527px;top:617px;width:1px;height:5px;background:#606060"></div>
<div class="a" style="left:576px;top:617px;width:1px;height:5px;background:#606060"></div>
<div class="a" style="left:625px;top:617px;width:1px;height:5px;background:#606060"></div>
<div class="a" style="left:674px;top:617px;width:1px;height:5px;background:#606060"></div>
<div class="a" style="left:723px;top:617px;width:1px;height:5px;background:#606060"></div>
<div class="a" style="left:772px;top:617px;width:1px;height:5px;background:#606060"></div>
<div class="a" style="left:822px;top:617px;width:1px;height:5px;background:#606060"></div>
<div class="t" style="left:478px;top:620px;font-size:12px;line-height:13px;color:#d02020">気温℃</div>
<div class="t" style="left:478px;top:632px;font-size:12px;line-height:13px;color:#2020c0">日降水mm</div>
<div class="t" style="left:507px;top:621px;width:40px;text-align:center;font-size:12px;line-height:13px;color:#4848e0">−20</div>
<div class="t" style="left:556px;top:621px;width:40px;text-align:center;font-size:12px;line-height:13px;color:#4848e0">−10</div>
<div class="t" style="left:605.5px;top:621px;width:40px;text-align:center;font-size:12px;line-height:13px;color:#4848e0">0</div>
<div class="t" style="left:655px;top:621px;width:40px;text-align:center;font-size:12px;line-height:13px;color:#e02020">10</div>
<div class="t" style="left:704px;top:621px;width:40px;text-align:center;font-size:12px;line-height:13px;color:#e02020">20</div>
<div class="t" style="left:752px;top:621px;width:40px;text-align:center;font-size:12px;line-height:13px;color:#e02020">30</div>
<div class="t" style="left:813px;top:621px;font-size:12px;line-height:13px;color:#e02020">40℃</div>
<div class="t" style="left:605px;top:632px;width:40px;text-align:center;font-size:12px;line-height:13px;color:#2020d0">0</div>
<div class="t" style="left:655px;top:632px;width:40px;text-align:center;font-size:12px;line-height:13px;color:#2020d0">20</div>
<div class="t" style="left:704px;top:632px;width:40px;text-align:center;font-size:12px;line-height:13px;color:#2020d0">40</div>
<div class="t" style="left:753px;top:632px;width:40px;text-align:center;font-size:12px;line-height:13px;color:#2020d0">60</div>
<div class="t" style="left:813px;top:632px;font-size:12px;line-height:13px;color:#2020d0">80mm</div>
<div class="a" style="left:853px;top:476px;width:13px;height:44px;background:#e8e8e8;border:1px solid #d0d0d0"></div>
<svg class="a" style="left:855px;top:492px" width="9" height="8"><path d="M4.5 0L9 8H0Z" fill="#a0a0a0"/></svg>
<div class="t" style="left:853px;top:528px;width:13px;text-align:center;font-size:10px;line-height:12px;color:#a0a0a0">日</div>
<div class="a" style="left:853px;top:547px;width:13px;height:41px;background:#e8e8e8;border:1px solid #d0d0d0"></div>
<svg class="a" style="left:855px;top:563px" width="9" height="8"><path d="M0 0H9L4.5 8Z" fill="#a0a0a0"/></svg>
<div class="a" style="left:853px;top:616px;width:13px;height:28px;background:#f8f8e8;border:1px solid #d8d8d8"></div>
<div class="t" style="left:853px;top:617px;width:13px;text-align:center;font-size:9px;line-height:12px;color:#909090">晴<br>N</div>
<svg class="a" style="left:513px;top:438px" width="77" height="180" viewBox="0 0 77 180"><defs><linearGradient id="cg" x1="0" y1="0" x2="0" y2="1"><stop offset="0" stop-color="#f4f4f4"/><stop offset="1" stop-color="#a8a8a8"/></linearGradient><linearGradient id="ug" x1="0" y1="0" x2="1" y2="0"><stop offset="0" stop-color="#1030c0"/><stop offset=".5" stop-color="#3a78f0"/><stop offset="1" stop-color="#1030c0"/></linearGradient><pattern id="rain" width="5" height="10" patternUnits="userSpaceOnUse"><rect width="5" height="10" fill="#fff"/><rect x="0" width="1.2" height="10" fill="#2a2aff"/><rect x="2.5" width="1.2" height="10" fill="#9090ff"/></pattern></defs><rect x="1" y="2.5" width="75" height="26" fill="url(#rain)"/><rect x="24" y="19" width="24" height="10" fill="#fff"/><path d="M36.0,17.0 L36.0,25.0 Q36.0,27.5 33.0,27.5 Q30.5,27.0 30.5,24.0" fill="none" stroke="#d89050" stroke-width="2"/><path d="M23.0,19.0 Q23.0,6.0 35.5,6.0 Q48.0,6.0 48.0,19.0 Q45.9,16.0 43.8,19.0 Q41.8,16.0 39.7,19.0 Q37.6,16.0 35.5,19.0 Q33.4,16.0 31.3,19.0 Q29.2,16.0 27.2,19.0 Q25.1,16.0 23.0,19.0 Z" fill="url(#ug)" stroke="#0a1a90" stroke-width=".8"/><path d="M35.5,7.0 L27.2,17.5" stroke="#0a2aa0" stroke-width=".6"/><path d="M35.5,7.0 L31.3,17.5" stroke="#0a2aa0" stroke-width=".6"/><path d="M35.5,7.0 L35.5,17.5" stroke="#0a2aa0" stroke-width=".6"/><path d="M35.5,7.0 L39.7,17.5" stroke="#0a2aa0" stroke-width=".6"/><path d="M35.5,7.0 L43.8,17.5" stroke="#0a2aa0" stroke-width=".6"/><path d="M58.3,12.0 C56.5,12.0 56.8,8.2 59.2,7.1 C60.3,4.7 62.5,5.0 63.8,6.3 C67.5,6.8 68.2,9.9 66.3,12.0 Z" fill="url(#cg)" stroke="#303030" stroke-width="1"/><path d="M68,7.5 L64,18 L68,18 L65,28 L74,15 L70,15 L73,7.5 Z" fill="#fff200" stroke="#202040" stroke-width=".7"/><path d="M42.0,48.0 L42.0,56.0 Q42.0,58.5 39.0,58.5 Q36.5,58.0 36.5,55.0" fill="none" stroke="#d89050" stroke-width="2"/><path d="M41.4,33.0 L51.0,50.0 L36.0,50.0 Z" fill="#1c28b0" stroke="#101880" stroke-width=".6"/><path d="M23.0,53.0 C18.8,53.0 19.5,44.2 25.0,41.8 C27.5,36.2 32.5,37.0 35.5,39.9 C43.8,41.0 45.5,48.2 41.2,53.0 Z" fill="url(#cg)" stroke="#303030" stroke-width="1"/><circle cx="67" cy="39.80000000000001" r="3.8" fill="#ff0000"/><path d="M37.6,83.0 C33.9,83.0 34.6,74.8 39.4,72.5 C41.6,67.2 46.0,68.0 48.6,70.7 C55.9,71.8 57.4,78.5 53.7,83.0 Z" fill="url(#cg)" stroke="#303030" stroke-width="1"/><path d="M36.0,76.0 L36.0,85.0 Q36.0,87.5 33.0,87.5 Q30.5,87.0 30.5,84.0" fill="none" stroke="#d89050" stroke-width="2"/><path d="M23.0,78.5 Q23.0,64.5 35.5,64.5 Q48.0,64.5 48.0,78.5 Q45.9,75.5 43.8,78.5 Q41.8,75.5 39.7,78.5 Q37.6,75.5 35.5,78.5 Q33.4,75.5 31.3,78.5 Q29.2,75.5 27.2,78.5 Q25.1,75.5 23.0,78.5 Z" fill="url(#ug)" stroke="#0a1a90" stroke-width=".8"/><path d="M35.5,65.5 L27.2,77.0" stroke="#0a2aa0" stroke-width=".6"/><path d="M35.5,65.5 L31.3,77.0" stroke="#0a2aa0" stroke-width=".6"/><path d="M35.5,65.5 L35.5,77.0" stroke="#0a2aa0" stroke-width=".6"/><path d="M35.5,65.5 L39.7,77.0" stroke="#0a2aa0" stroke-width=".6"/><path d="M35.5,65.5 L43.8,77.0" stroke="#0a2aa0" stroke-width=".6"/><path d="M40.0,113.0 C37.1,113.0 37.7,104.8 41.4,102.5 C43.1,97.2 46.5,98.0 48.5,100.7 C54.1,101.8 55.3,108.5 52.5,113.0 Z" fill="url(#cg)" stroke="#303030" stroke-width="1"/><polygon points="31.0,92.4 33.1,97.5 37.4,94.1 36.6,99.6 42.1,98.8 38.7,103.1 43.8,105.2 38.7,107.3 42.1,111.6 36.6,110.8 37.4,116.3 33.1,112.9 31.0,118.0 28.9,112.9 24.6,116.3 25.4,110.8 19.9,111.6 23.3,107.3 18.2,105.2 23.3,103.1 19.9,98.8 25.4,99.6 24.6,94.1 28.9,97.5" fill="#ff1010"/><circle cx="31.0" cy="105.2" r="7.0" fill="#ff2020" stroke="#ff7030" stroke-width=".5"/><polygon points="42.5,121.0 44.2,125.2 47.8,122.4 47.1,126.9 51.6,126.2 48.8,129.8 53.0,131.5 48.8,133.2 51.6,136.8 47.1,136.1 47.8,140.6 44.2,137.8 42.5,142.0 40.8,137.8 37.2,140.6 37.9,136.1 33.4,136.8 36.2,133.2 32.0,131.5 36.2,129.8 33.4,126.2 37.9,126.9 37.2,122.4 40.8,125.2" fill="#ff1010"/><circle cx="42.5" cy="131.5" r="5.8" fill="#ff2020" stroke="#ff7030" stroke-width=".5"/><path d="M24.6,144.5 C20.2,144.5 21.0,135.4 26.6,132.9 C29.1,127.2 34.2,128.0 37.3,131.0 C45.7,132.1 47.5,139.6 43.2,144.5 Z" fill="url(#cg)" stroke="#303030" stroke-width="1"/><path d="M42.0,168.0 L42.0,174.0 Q42.0,176.5 39.0,176.5 Q36.5,176.0 36.5,173.0" fill="none" stroke="#d89050" stroke-width="2"/><path d="M40.4,153.0 L50.5,170.0 L35.0,170.0 Z" fill="#1c28b0" stroke="#101880" stroke-width=".6"/><polygon points="30.3,152.0 32.3,157.0 36.5,153.7 35.8,159.0 41.1,158.2 37.8,162.5 42.8,164.5 37.8,166.5 41.1,170.8 35.8,170.0 36.5,175.3 32.3,172.0 30.3,177.0 28.3,172.0 24.0,175.3 24.8,170.0 19.5,170.8 22.8,166.5 17.8,164.5 22.8,162.5 19.5,158.2 24.8,159.0 24.0,153.7 28.3,157.0" fill="#ff1010"/><circle cx="30.3" cy="164.5" r="6.9" fill="#ff2020" stroke="#ff7030" stroke-width=".5"/></svg>
<div class="a" style="left:509px;top:320px;width:3px;height:3px;background:#e00000"></div>
<div class="a" style="left:855px;top:320px;width:3px;height:3px;background:#e00000"></div>
<div class="a" style="left:509px;top:468px;width:3px;height:3px;background:#e00000"></div>
<div class="a" style="left:855px;top:467px;width:3px;height:3px;background:#e00000"></div>
<div class="a" style="left:543px;top:435px;width:3px;height:3px;background:#e00000"></div>
<div class="a" style="left:513px;top:57px;width:66px;height:17px;background:#fbfbfb;border:1px solid #b0b0b0;border-bottom:none"></div>
<div class="t" style="left:524.6px;top:57px;font-size:12px;line-height:16px;color:#a0a0a0;"><span id="f19" style="display:inline-block;transform:scaleX(0.6978);transform-origin:0 0">Navi ツール</span></div>
<div class="a" style="left:515px;top:76px;width:142px;height:362px;background:rgba(0,0,0,.25);filter:blur(2px)"></div>
<div class="a" style="left:512px;top:73px;width:142px;height:362px;background:#fcfcfc;border:1px solid #a8a8a8"></div>
<div class="a" style="left:579px;top:73px;width:75px;height:1px;background:#a8a8a8"></div>
<div class="a" style="left:513px;top:74px;width:20px;height:360px;background:#f2f2f2;border-right:1px solid #e6e6e6"></div>
<div class="a" style="left:514px;top:206px;width:138px;height:18px;background:#bdd8f4;border:1px solid #73a8e0"></div>
<div class="t" style="left:541.8px;top:76px;font-size:11.5px;line-height:14px;color:#111;"><span id="f20" style="display:inline-block;transform:scaleX(0.7290);transform-origin:0 0">AI&nbsp; 晴れ ナビ</span></div>
<div class="t" style="left:541.8px;top:94px;font-size:11.5px;line-height:14px;color:#111;"><span id="f21" style="display:inline-block;transform:scaleX(0.7407);transform-origin:0 0">AI&nbsp; 快晴 ナビ</span></div>
<div class="t" style="left:541.8px;top:112.5px;font-size:11.5px;line-height:14px;color:#111;"><span id="f22" style="display:inline-block;transform:scaleX(0.7207);transform-origin:0 0">AI&nbsp; 雨&nbsp;&nbsp;&nbsp;&nbsp; ナビ</span></div>
<div class="t" style="left:541.8px;top:135.5px;font-size:11.5px;line-height:14px;color:#111;"><span id="f23" style="display:inline-block;transform:scaleX(0.8259);transform-origin:0 0">AI&nbsp; 最高気温</span></div>
<div class="t" style="left:541.8px;top:153.7px;font-size:11.5px;line-height:14px;color:#111;"><span id="f24" style="display:inline-block;transform:scaleX(0.8259);transform-origin:0 0">AI&nbsp; 最低気温</span></div>
<div class="t" style="left:541.8px;top:171.8px;font-size:11.5px;line-height:14px;color:#111;"><span id="f25" style="display:inline-block;transform:scaleX(0.8254);transform-origin:0 0">AI&nbsp; 降雪 特性</span></div>
<div class="t" style="left:541.8px;top:189.7px;font-size:11.5px;line-height:14px;color:#111;"><span id="f26" style="display:inline-block;transform:scaleX(0.8254);transform-origin:0 0">AI&nbsp; 積雪 特性</span></div>
<div class="t" style="left:541.8px;top:208.3px;font-size:11.5px;line-height:14px;color:#111;"><span id="f27" style="display:inline-block;transform:scaleX(0.8333);transform-origin:0 0">最大１時間降水量</span></div>
<div class="t" style="left:541.8px;top:231.4px;font-size:11.5px;line-height:14px;color:#111;"><span id="f28" style="display:inline-block;transform:scaleX(0.8161);transform-origin:0 0">AI&nbsp; 雷&nbsp;&nbsp;&nbsp;&nbsp; 特性</span></div>
<div class="t" style="left:541.8px;top:249.4px;font-size:11.5px;line-height:14px;color:#111;"><span id="f29" style="display:inline-block;transform:scaleX(0.8166);transform-origin:0 0">AI&nbsp; 大雨 特性</span></div>
<div class="t" style="left:541.8px;top:267.5px;font-size:11.5px;line-height:14px;color:#111;"><span id="f30" style="display:inline-block;transform:scaleX(0.8166);transform-origin:0 0">AI&nbsp; 大風 特性</span></div>
<div class="t" style="left:541.8px;top:285.2px;font-size:11.5px;line-height:14px;color:#111;"><span id="f31" style="display:inline-block;transform:scaleX(0.8166);transform-origin:0 0">AI&nbsp; 大雪 特性</span></div>
<div class="t" style="left:541.8px;top:303.9px;font-size:11.5px;line-height:14px;color:#111;"><span id="f32" style="display:inline-block;transform:scaleX(0.8191);transform-origin:0 0">AI&nbsp; 暴風雨 特性</span></div>
<div class="t" style="left:541.8px;top:321.9px;font-size:11.5px;line-height:14px;color:#111;"><span id="f33" style="display:inline-block;transform:scaleX(0.7483);transform-origin:0 0">AI&nbsp; ふぶき 特性</span></div>
<div class="t" style="left:541.8px;top:344.3px;font-size:11.5px;line-height:14px;color:#111;"><span id="f34" style="display:inline-block;transform:scaleX(0.7731);transform-origin:0 0">AI&nbsp; みぞれ 特性</span></div>
<div class="t" style="left:541.8px;top:362.4px;font-size:11.5px;line-height:14px;color:#111;"><span id="f35" style="display:inline-block;transform:scaleX(0.7607);transform-origin:0 0">AI&nbsp; あられ 特性</span></div>
<div class="t" style="left:541.8px;top:381px;font-size:11.5px;line-height:14px;color:#111;"><span id="f36" style="display:inline-block;transform:scaleX(0.7420);transform-origin:0 0">AI&nbsp; ひょう 特性</span></div>
<div class="t" style="left:541.8px;top:398.8px;font-size:11.5px;line-height:14px;color:#111;"><span id="f37" style="display:inline-block;transform:scaleX(0.8308);transform-origin:0 0">Ai 霧雨&nbsp;&nbsp; 特性</span></div>
<div class="t" style="left:541.8px;top:417.5px;font-size:11.5px;line-height:14px;color:#111;"><span id="f38" style="display:inline-block;transform:scaleX(0.8601);transform-origin:0 0">Ai 霧&nbsp;&nbsp;&nbsp;&nbsp;&nbsp; 特性</span></div>
<div class="a" style="left:534px;top:132px;width:117px;height:1px;background:#d8d8d8"></div>
<div class="a" style="left:534px;top:227px;width:117px;height:1px;background:#d8d8d8"></div>
<div class="a" style="left:534px;top:340px;width:117px;height:1px;background:#d8d8d8"></div>
</body></html>
